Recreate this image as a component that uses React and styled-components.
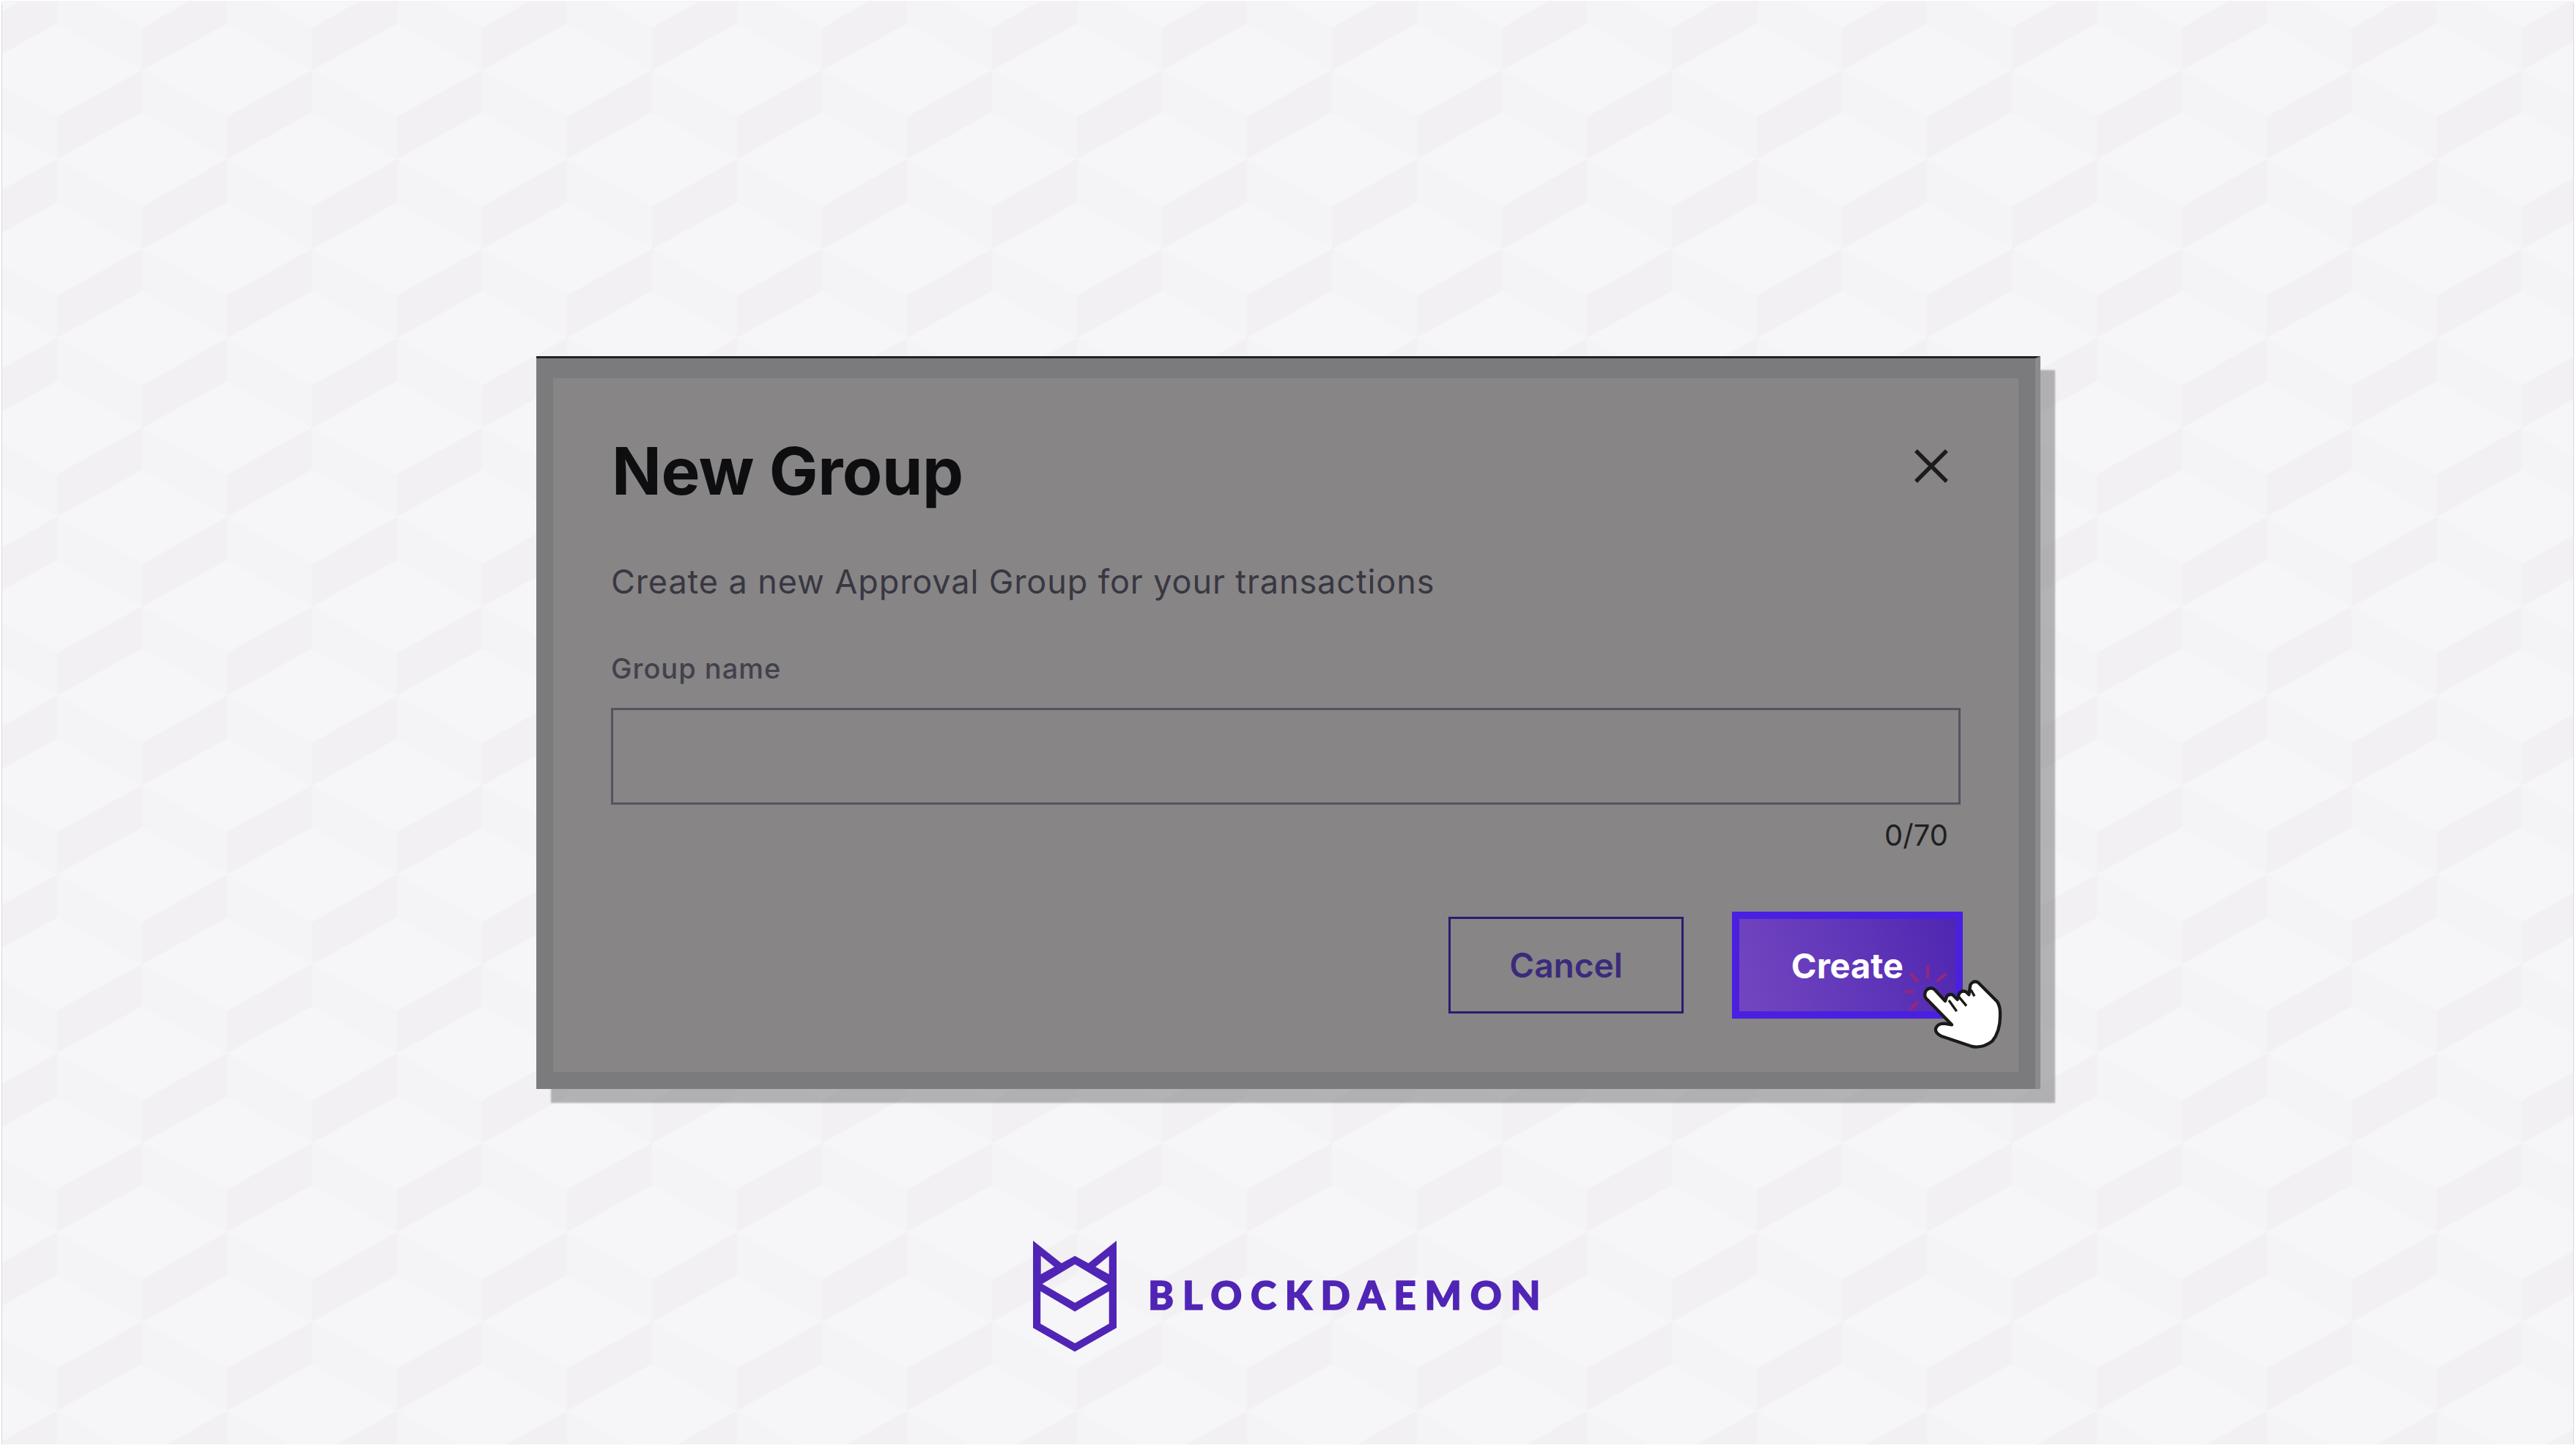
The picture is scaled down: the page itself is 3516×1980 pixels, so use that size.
import React from "react";
import styled, { createGlobalStyle } from "styled-components";

const tile = `<svg xmlns="http://www.w3.org/2000/svg" width="232" height="244" viewBox="0 0 232 244"><rect width="232" height="244" fill="#f6f6f8"/><g fill="#f2f0f3"><polygon points="232,63.5 116,127 116,185 232,121"/><polygon points="0,250 116,185 116,244 0,308"/><polygon points="0,6 116,-59 116,0 0,64"/></g><g fill="#f4f3f6"><polygon points="0,63.5 116,127 116,185 0,121"/><polygon points="116,185 232,250 232,308 116,244"/><polygon points="116,-59 232,6 232,64 116,0"/></g></svg>`;

const GlobalStyle = createGlobalStyle`
  html, body { margin: 0; padding: 0; background: #ffffff; }
  body { font-family: "Inter", "Liberation Sans", sans-serif; }
  * { box-sizing: border-box; }
`;

const Stage = styled.main`
  width: 3509px;
  height: 1969px;
  margin: 2px 0 0 3px;
  padding: 484px 0 0 729px;
  display: flex;
  flex-direction: column;
  align-items: flex-start;
  background-color: #f6f6f8;
  background-image: url("data:image/svg+xml,${encodeURIComponent(tile)}");
  background-position: -41px 30px;
  box-shadow: 0 2px 2px rgba(0, 0, 0, 0.32), 0 0 1px rgba(0, 0, 0, 0.25);
`;

const Dialog = styled.section`
  width: 2053px;
  height: 1000px;
  padding: 27px 23px 23px;
  background: #7b7b7d;
  border-top: 3px solid #222224;
  border-right: 7px solid #8b8b8c;
  box-shadow: 20px 19px 2px rgba(0, 0, 0, 0.27);
`;

const Card = styled.div`
  height: 100%;
  padding: 82px 79px 0;
  display: flex;
  flex-direction: column;
  background: #878586;
`;

const Header = styled.header`
  display: flex;
  justify-content: space-between;
  align-items: flex-start;
`;

const Title = styled.h1`
  margin: 0 0 0 1px;
  font-size: 89px;
  line-height: 1;
  font-weight: 700;
  letter-spacing: -0.4px;
  color: #0e0e10;
`;

const CloseButton = styled.button`
  width: 46px;
  height: 46px;
  margin: 15px 17px 0 0;
  padding: 0;
  border: 0;
  background: none;
  display: block;
`;

const Subtitle = styled.p`
  margin: 84px 0 0;
  font-size: 45px;
  line-height: 1;
  font-weight: 400;
  letter-spacing: 0.9px;
  color: #383742;
`;

const Label = styled.label`
  margin-top: 77px;
  font-size: 38px;
  line-height: 1;
  font-weight: 500;
  letter-spacing: 1px;
  color: #42414c;
`;

const NameInput = styled.input`
  margin-top: 35px;
  width: 100%;
  height: 132px;
  flex: none;
  border: 3px solid #54535e;
  border-radius: 0;
  background: transparent;
  outline: none;
`;

const Counter = styled.div`
  margin-top: 22px;
  padding-right: 17px;
  text-align: right;
  font-size: 40px;
  line-height: 1;
  color: #1f1f22;
`;

const Actions = styled.div`
  margin: 84px -3px 0 0;
  display: flex;
  justify-content: flex-end;
  align-items: center;
  gap: 66px;
`;

const CancelButton = styled.button`
  width: 321px;
  height: 132px;
  border: 3px solid #2e1a70;
  border-radius: 0;
  background: transparent;
  font-family: inherit;
  font-size: 46px;
  font-weight: 600;
  color: #3b2a7c;
`;

const CreateButton = styled.button`
  position: relative;
  width: 315px;
  height: 146px;
  border: 10px solid #4a20e0;
  border-radius: 0;
  background: linear-gradient(70deg, #7345c0 0%, #6238ba 50%, #4f26b0 100%);
  font-family: inherit;
  font-size: 47px;
  font-weight: 700;
  color: #ffffff;
`;

const Pointer = styled.svg`
  position: absolute;
  left: 226px;
  top: 66px;
  width: 130px;
  height: 120px;
  overflow: visible;
`;

const Brand = styled.div`
  margin: 207px 0 0 678px;
  display: flex;
  align-items: center;
  gap: 43px;
`;

const BrandName = styled.span`
  margin-bottom: 5px;
  font-family: "Lato", "Liberation Sans", sans-serif;
  font-size: 53px;
  line-height: 1;
  font-weight: 900;
  letter-spacing: 11.8px;
  -webkit-text-stroke: 1.6px #5025b5;
  color: #5025b5;
`;

const CloseIcon = () => (
  <svg width="46" height="46" viewBox="0 0 46 46" fill="none" stroke="#1c1c1e" strokeWidth="5.5">
    <path d="M2 2 L44 44 M44 2 L2 44" />
  </svg>
);

const HandPointer = () => (
  <Pointer viewBox="0 0 390 360" aria-hidden="true">
    <g stroke="#93287f" strokeWidth="13" fill="none">
      <path d="M93 -8 L93 45 M20 25 L55 58 M170 25 L130 58 M-2 100 L38 100 M18 175 L55 140" />
    </g>
    <path
      d="M82 108 Q85 88 105 85 Q118 85 128 98 L165 138 L172 118 Q180 108 195 112 L215 132 L222 108 Q232 92 250 100 L262 112 L268 72 Q280 52 300 62 L378 140 Q392 160 390 200 Q390 262 358 302 Q320 332 275 324 L150 282 Q123 270 126 250 Q135 230 160 230 L192 235 L85 125 Q80 115 82 108 Z"
      fill="#ffffff"
      stroke="#1a1a1a"
      strokeWidth="13"
      strokeLinejoin="round"
    />
    <path d="M180 135 L212 180 M222 122 L252 158 M270 92 L285 118" stroke="#1a1a1a" strokeWidth="10" fill="none" />
  </Pointer>
);

const BrandMark = () => (
  <svg width="114" height="152" viewBox="0 0 114 152" aria-hidden="true">
    <path
      fill="#5025b5"
      fillRule="evenodd"
      d="M0 0 L38.8 30.7 L57.2 20.7 L75.6 30.7 L114 0 L114 119 L57 151.5 L0 119 Z
         M10.7 20.7 L29 35.7 L10.7 45.7 Z
         M103.7 20.7 L85.3 35.7 L103.7 45.7 Z
         M57.2 32.3 L101.8 59 L57.2 84.7 L12.6 59 Z
         M10.2 69 L57.2 96.7 L103.7 69 L103.7 113.3 L57.2 140 L10.2 113.3 Z"
    />
  </svg>
);

export default function App() {
  return (
    <>
      <GlobalStyle />
      <Stage>
        <Dialog>
          <Card>
            <Header>
              <Title>New Group</Title>
              <CloseButton aria-label="Close">
                <CloseIcon />
              </CloseButton>
            </Header>
            <Subtitle>Create a new Approval Group for your transactions</Subtitle>
            <Label htmlFor="group-name">Group name</Label>
            <NameInput id="group-name" />
            <Counter>0/70</Counter>
            <Actions>
              <CancelButton>Cancel</CancelButton>
              <CreateButton>
                Create
                <HandPointer />
              </CreateButton>
            </Actions>
          </Card>
        </Dialog>
        <Brand>
          <BrandMark />
          <BrandName>BLOCKDAEMON</BrandName>
        </Brand>
      </Stage>
    </>
  );
}
